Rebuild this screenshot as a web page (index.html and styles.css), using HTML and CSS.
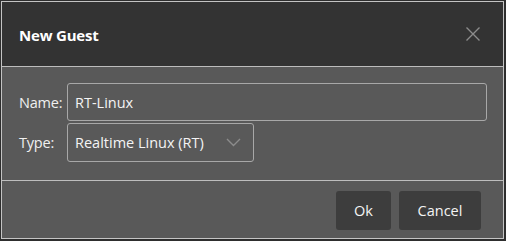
FILE: index.html
```html
<!DOCTYPE html>
<html>
<head>
<meta charset="utf-8">
<link rel="stylesheet" href="styles.css">
</head>
<body>
<div class="dialog">
  <div class="header">
    <div class="title">New Guest</div>
    <button class="close" aria-label="Close">
      <svg width="16" height="16" viewBox="0 0 16 16"><path d="M1.5 1.5 L14.5 14.5 M14.5 1.5 L1.5 14.5" stroke="#8c8c8c" stroke-width="1.4" fill="none"/></svg>
    </button>
  </div>
  <div class="body">
    <label class="label">Name:</label>
    <div class="input">RT-Linux</div>
    <label class="label">Type:</label>
    <div class="select">
      <span>Realtime Linux (RT)</span>
      <svg width="15" height="9" viewBox="0 0 15 9"><path d="M1 1 L7.5 7.5 L14 1" stroke="#8c8c8c" stroke-width="1.4" fill="none"/></svg>
    </div>
  </div>
  <div class="footer">
    <button class="btn ok">Ok</button>
    <button class="btn cancel">Cancel</button>
  </div>
</div>
</body>
</html>
```
FILE: styles.css
```css
html, body {
  margin: 0;
  padding: 0;
  background: #2e2e2e;
  width: 506px;
  height: 241px;
  overflow: hidden;
}
body {
  padding: 1px 0 0 1px;
  box-sizing: border-box;
  font-family: "Open Sans", "Noto Sans", sans-serif;
  color: #f0f0f0;
}
.dialog {
  width: 503px;
  height: 238px;
  box-sizing: border-box;
  border: 1px solid #c4c4c4;
  background: #595959;
  display: flex;
  flex-direction: column;
}
.header {
  height: 65px;
  box-sizing: border-box;
  background: #333333;
  border-bottom: 1px solid #bdbdbd;
  display: flex;
  align-items: center;
  justify-content: space-between;
  padding: 0 22px 0 17px;
}
.title {
  font-weight: 700;
  font-size: 15px;
  color: #ffffff;
  letter-spacing: -0.2px;
  margin-top: 1px;
}
.close {
  background: none;
  border: 0;
  padding: 0;
  width: 16px;
  height: 16px;
  display: flex;
}
.body {
  height: 114px;
  box-sizing: border-box;
  border-bottom: 1px solid #bdbdbd;
  padding: 16px 16px 0 17px;
  display: grid;
  grid-template-columns: 48px 420px;
  grid-auto-rows: 38px;
  row-gap: 2px;
  align-items: center;
}
.label {
  font-size: 14.5px;
  color: #f0f0f0;
  letter-spacing: -0.2px;
}
.input, .select {
  height: 38px;
  box-sizing: border-box;
  border: 1px solid #a8a8a8;
  border-radius: 3px;
  font-size: 14.5px;
  color: #f4f4f4;
  display: flex;
  align-items: center;
  padding-left: 7px;
}
.select {
  width: 187px;
  height: 39px;
  justify-content: space-between;
  padding-right: 12px;
}
.footer {
  flex: 1;
  display: flex;
  justify-content: flex-end;
  align-items: flex-start;
  padding: 10px 22px 0 0;
  gap: 8px;
}
.btn {
  height: 39px;
  border: 0;
  border-radius: 3px;
  background: #3d3d3d;
  color: #f4f4f4;
  font-family: "Open Sans", "Noto Sans", sans-serif;
  font-size: 14.5px;
  padding: 0;
}
.ok { width: 55px; }
.cancel { width: 82px; }
```
